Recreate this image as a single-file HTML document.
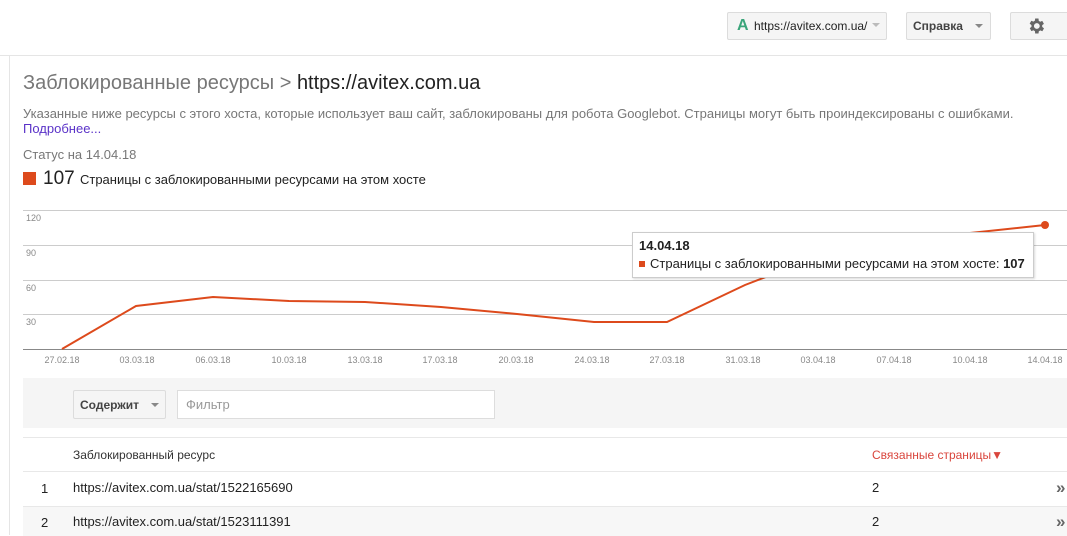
<!DOCTYPE html>
<html><head><meta charset="utf-8"><style>
body{margin:0;width:1067px;height:535px;overflow:hidden;background:#fff;font-family:"Liberation Sans",Arial,sans-serif;position:relative}
.a{position:absolute;white-space:nowrap}
.btn{position:absolute;background:#f5f5f5;border:1px solid #dcdcdc;border-radius:2px;box-sizing:border-box}
.arr{position:absolute;width:0;height:0;border-left:4px solid transparent;border-right:4px solid transparent;border-top:4px solid #888}
</style></head><body>
<div class="a" style="left:0;top:55px;width:1067px;height:1px;background:#e5e5e5"></div>
<div class="a" style="left:9px;top:56px;width:1px;height:479px;background:#e5e5e5"></div>

<div class="btn" style="left:727px;top:12px;width:160px;height:28px"></div>
<div class="a" style="left:737px;top:17px;font-size:16px;font-weight:bold;color:#3aa57a">A</div>
<div class="a" style="left:754px;top:19px;font-size:12px;color:#222">https://avitex.com.ua/</div>
<div class="arr" style="left:872px;top:23px;border-top-color:#bbb"></div>
<div class="btn" style="left:906px;top:12px;width:85px;height:28px"></div>
<div class="a" style="left:913px;top:19px;font-size:12px;font-weight:bold;color:#444">Справка</div>
<div class="arr" style="left:975px;top:24px"></div>
<div class="btn" style="left:1010px;top:12px;width:60px;height:28px"></div>
<svg class="a" style="left:1026px;top:16px" width="20" height="20" viewBox="0 0 24 24"><path fill="#666" d="M19.4 13a7.5 7.5 0 000-2l2.1-1.6-2-3.5-2.5 1a7.3 7.3 0 00-1.7-1L15 3h-4l-.4 2.7a7.3 7.3 0 00-1.7 1l-2.5-1-2 3.5L6.6 11a7.5 7.5 0 000 2l-2.1 1.6 2 3.5 2.5-1c.5.4 1.1.7 1.7 1L11 21h4l.4-2.7c.6-.3 1.2-.6 1.7-1l2.5 1 2-3.5zM13 15.5a3.5 3.5 0 110-7 3.5 3.5 0 010 7z"/></svg>

<div class="a" style="left:23px;top:72px;font-size:20px;color:#777">Заблокированные ресурсы &gt; <span style="color:#222">https://avitex.com.ua</span></div>
<div class="a" style="left:23px;top:106px;font-size:13px;color:#777">Указанные ниже ресурсы с этого хоста, которые использует ваш сайт, заблокированы для робота Googlebot. Страницы могут быть проиндексированы с ошибками.</div>
<div class="a" style="left:23px;top:121px;font-size:13px;color:#5a32c8">Подробнее...</div>
<div class="a" style="left:23px;top:147px;font-size:13px;color:#777">Статус на 14.04.18</div>
<div class="a" style="left:23px;top:172px;width:13px;height:13px;background:#dd4a1c"></div>
<div class="a" style="left:43px;top:168px;font-size:19px;color:#222">107 <span style="font-size:13px">Страницы с заблокированными ресурсами на этом хосте</span></div>

<svg class="a" style="left:0;top:200px" width="1067" height="170">
<g stroke="#ccc" stroke-width="1"><line x1="23" y1="10.5" x2="1067" y2="10.5"/><line x1="23" y1="45.5" x2="1067" y2="45.5"/><line x1="23" y1="80.5" x2="1067" y2="80.5"/><line x1="23" y1="114.5" x2="1067" y2="114.5"/></g>
<line x1="23" y1="149.5" x2="1067" y2="149.5" stroke="#888"/>
<g font-size="9" fill="#888" font-family="Liberation Sans"><text x="26" y="21">120</text><text x="26" y="56">90</text><text x="26" y="91">60</text><text x="26" y="125">30</text></g>
<polyline fill="none" stroke="#dd4a1c" stroke-width="2" points="62,149 136,106 213,97 289,101 365,102 441,107 517,114 594,122 667,122 745,85 820,56 895,40 970,33 1045,25"/>
<circle cx="1045" cy="25" r="4" fill="#dd4a1c"/>
<g font-size="9" fill="#888" font-family="Liberation Sans" text-anchor="middle"><text x="62" y="163">27.02.18</text><text x="137" y="163">03.03.18</text><text x="213" y="163">06.03.18</text><text x="289" y="163">10.03.18</text><text x="365" y="163">13.03.18</text><text x="440" y="163">17.03.18</text><text x="516" y="163">20.03.18</text><text x="592" y="163">24.03.18</text><text x="667" y="163">27.03.18</text><text x="743" y="163">31.03.18</text><text x="818" y="163">03.04.18</text><text x="894" y="163">07.04.18</text><text x="970" y="163">10.04.18</text><text x="1045" y="163">14.04.18</text></g>
</svg>
<div class="a" style="left:632px;top:232px;width:402px;height:46px;background:#fff;border:1px solid #ccc;box-shadow:1px 1px 2px rgba(0,0,0,.15);box-sizing:border-box"></div>
<div class="a" style="left:639px;top:238px;font-size:13px;font-weight:bold;color:#222">14.04.18</div>
<div class="a" style="left:639px;top:261px;width:6px;height:6px;background:#dd4a1c"></div>
<div class="a" style="left:650px;top:256px;font-size:13px;color:#222">Страницы с заблокированными ресурсами на этом хосте: <b>107</b></div>

<div class="a" style="left:23px;top:378px;width:1044px;height:50px;background:#f5f5f5"></div>
<div class="btn" style="left:73px;top:390px;width:93px;height:29px"></div>
<div class="a" style="left:80px;top:398px;font-size:12px;font-weight:bold;color:#444">Содержит</div>
<div class="arr" style="left:151px;top:403px"></div>
<div class="a" style="left:177px;top:390px;width:318px;height:29px;background:#fff;border:1px solid #ddd;box-sizing:border-box"></div>
<div class="a" style="left:186px;top:397px;font-size:13px;color:#999">Фильтр</div>

<div class="a" style="left:23px;top:437px;width:1044px;height:1px;background:#e8e8e8"></div>
<div class="a" style="left:73px;top:448px;font-size:12px;color:#333">Заблокированный ресурс</div>
<div class="a" style="left:872px;top:448px;font-size:12px;color:#d9453c">Связанные страницы▼</div>
<div class="a" style="left:23px;top:471px;width:1044px;height:1px;background:#e8e8e8"></div>
<div class="a" style="left:41px;top:481px;font-size:13px;color:#222">1</div>
<div class="a" style="left:73px;top:480px;font-size:13px;color:#222">https://avitex.com.ua/stat/1522165690</div>
<div class="a" style="left:872px;top:480px;font-size:13px;color:#222">2</div>
<div class="a" style="left:1056px;top:478px;font-size:17px;font-weight:bold;color:#666">»</div>
<div class="a" style="left:23px;top:506px;width:1044px;height:29px;background:#f7f7f7;border-top:1px solid #e8e8e8"></div>
<div class="a" style="left:41px;top:515px;font-size:13px;color:#222">2</div>
<div class="a" style="left:73px;top:514px;font-size:13px;color:#222">https://avitex.com.ua/stat/1523111391</div>
<div class="a" style="left:872px;top:514px;font-size:13px;color:#222">2</div>
<div class="a" style="left:1056px;top:512px;font-size:17px;font-weight:bold;color:#666">»</div>
</body></html>
